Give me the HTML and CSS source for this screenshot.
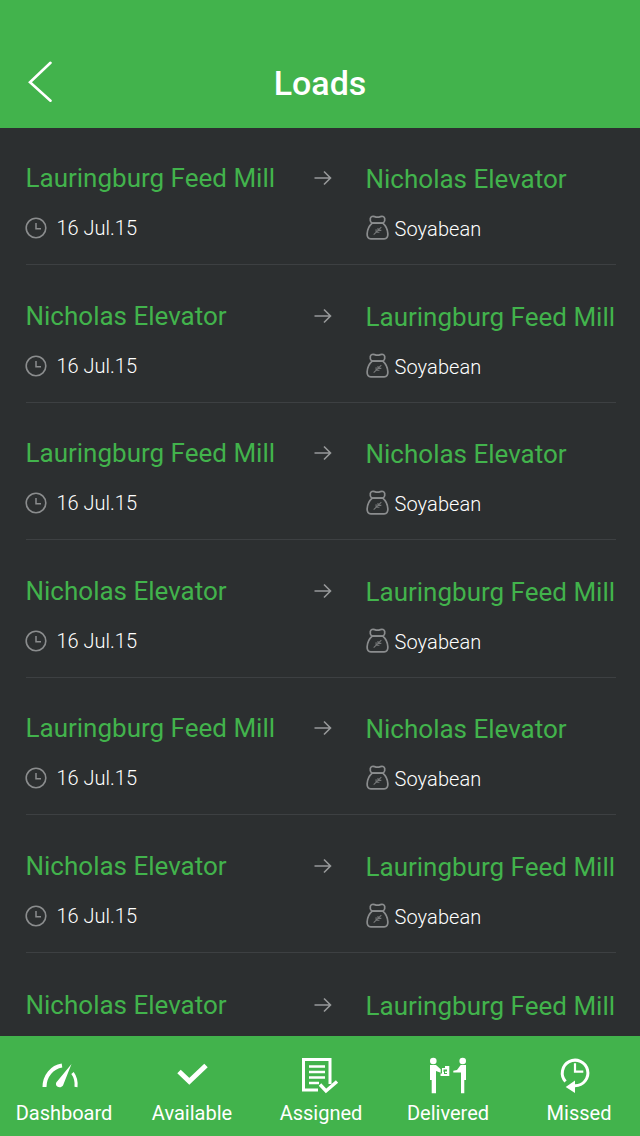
FILE: index.html

```html
<!DOCTYPE html>
<html lang="en">
<head>
  <meta charset="UTF-8">
  <meta name="viewport" content="width=device-width, initial-scale=1.0">
  <title>Loads</title>
  <link rel="stylesheet" href="styles.css">
</head>
<body>

  <svg class="icon-defs" width="0" height="0">
    <defs>
      <symbol id="clock" viewBox="0 0 22 22">
        <circle cx="11" cy="11" r="9.8" fill="none" stroke="#8b8d8e" stroke-width="1.6"/>
        <path d="M11 6v5.8h5" fill="none" stroke="#8b8d8e" stroke-width="1.5"/>
      </symbol>
      <symbol id="arrow" viewBox="0 0 18 16">
        <path d="M0.5 8h16M10 1.5L16.5 8L10 14.5" fill="none" stroke="#97999a" stroke-width="1.6"/>
      </symbol>
      <symbol id="sack" viewBox="0 0 24 26">
        <path d="M6 8.500C4.500 7 4 5.500 4.500 3.500C5 1.500 7 1 9 1.600C11 2.400 13 2.400 15 1.600C17 1 19 1.500 19.500 3.500C20 5.500 19.500 7 18 8.500Z" fill="none" stroke="#8b8d8e" stroke-width="1.800"/>
        <path d="M6.500 8.500C3.500 11 1.500 15 1.200 19.500C1 23 2.500 24.800 5 24.800H19C21.500 24.800 23 23 22.800 19.500C22.500 15 20.500 11 17.500 8.500Z" fill="none" stroke="#8b8d8e" stroke-width="1.800"/>
        <path d="M8 20.500L16 12.500M10.500 18V14.800M12.500 16V13.500M10.500 18H14M12.500 16H16" fill="none" stroke="#77797a" stroke-width="1.100"/>
      </symbol>
    </defs>
  </svg>

  <header class="header">
    <svg class="back-icon" width="26" height="42" viewBox="0 0 26 42">
      <path d="M23.500 1.800L3 21.300L23.500 39.700" fill="none" stroke="#fff" stroke-width="2.600" stroke-linecap="round"/>
    </svg>
    <h1 class="title">Loads</h1>
  </header>

  <main class="load-list" id="load-list"></main>

  <nav class="tabbar">
    <div class="tab">
      <svg class="tab-icon" width="44" height="38" viewBox="0 0 44 38">
        <path d="M2.500 30C2.500 19 10 10 20 8.500" fill="none" stroke="#fff" stroke-width="4"/>
        <path d="M30.500 16C33.500 20 34.500 25 34 30" fill="none" stroke="#fff" stroke-width="3"/>
        <path d="M29.500 7L21 28.500C19 31.500 14.500 30.500 14 27.500C13.800 26 14.500 25 15.500 24Z" fill="#fff"/>
      </svg>
      <span class="tab-label">Dashboard</span>
    </div>
    <div class="tab">
      <svg class="tab-icon" width="44" height="38" viewBox="0 0 44 38">
        <path d="M9 14.500L19.300 24.300L36 8.500" fill="none" stroke="#fff" stroke-width="5"/>
      </svg>
      <span class="tab-label">Available</span>
    </div>
    <div class="tab">
      <svg class="tab-icon" width="44" height="38" viewBox="0 0 44 38">
        <path d="M32 27V2.500H5.500V33H20" fill="none" stroke="#fff" stroke-width="3"/>
        <path d="M11 9.500H27M11 15H27M11 20.500H27M11 26H21" fill="none" stroke="#fff" stroke-width="2.400"/>
        <path d="M22 27.500L28 34L39 24.500" fill="none" stroke="#fff" stroke-width="3.400"/>
      </svg>
      <span class="tab-label">Assigned</span>
    </div>
    <div class="tab">
      <svg class="tab-icon" width="44" height="38" viewBox="0 0 44 38">
        <circle cx="7.300" cy="4" r="3.300" fill="#fff"/>
        <circle cx="36.700" cy="4" r="3.300" fill="#fff"/>
        <path d="M4 8H10L14.700 12.300V15.700L10 14V36.300H5.700V23H4Z" fill="#fff"/>
        <path d="M34.700 8H40V23H38.300V36.300H35V15.500L27.300 15.500V13.800L31 13Z" fill="#fff"/>
        <path d="M16 11H19V9H23.300V19H14.500V16.500H16Z" fill="#fff"/>
        <path d="M17.500 12.500H21V14.500H19V16H21V17H18V15H17.500Z" fill="#42b34c"/>
      </svg>
      <span class="tab-label">Delivered</span>
    </div>
    <div class="tab">
      <svg class="tab-icon" width="44" height="38" viewBox="0 0 44 38">
        <path d="M11.500 24.500A12.800 12.800 0 1 1 21 28.800" fill="none" stroke="#fff" stroke-width="3"/>
        <path d="M21 6.300V14.700H29.300" fill="none" stroke="#fff" stroke-width="2.200"/>
        <path d="M21 23.500V36L11.700 30Z" fill="#fff"/>
      </svg>
      <span class="tab-label">Missed</span>
    </div>
  </nav>

  <script>
    const mill = 'Lauringburg Feed Mill';
    const elevator = 'Nicholas Elevator';

    // Routes from top to bottom, the last row only shows its names above the tab bar
    const loads = [
      [mill, elevator], [elevator, mill], [mill, elevator], [elevator, mill],
      [mill, elevator], [elevator, mill], [elevator, mill]
    ];

    const list = document.getElementById('load-list');

    loads.forEach((route, i) => {
      const showMeta = i < loads.length - 1;
      const row = document.createElement('div');
      row.className = 'load-row';
      row.innerHTML = `
        <div class="load-side load-side-left">
          <div class="place">${route[0]}</div>
          ${showMeta ? `<div class="meta">
            <svg class="clock-icon" width="22" height="22"><use href="#clock"/></svg>
            <span>16 Jul.15</span>
          </div>` : ''}
        </div>
        <svg class="arrow-icon" width="18" height="16"><use href="#arrow"/></svg>
        <div class="load-side load-side-right">
          <div class="place">${route[1]}</div>
          ${showMeta ? `<div class="meta">
            <svg class="sack-icon" width="23" height="25"><use href="#sack"/></svg>
            <span class="crop-name">Soyabean</span>
          </div>` : ''}
        </div>`;
      list.appendChild(row);
    });
  </script>

</body>
</html>
```

FILE: styles.css

```css
html, body {
  height: 100%;
}
body {
  font-family: Roboto, "Liberation Sans", sans-serif;
  margin: 0;
  padding: 0;
  width: 640px;
  height: 1136px;
  overflow: hidden;
  display: flex;
  flex-direction: column;
  background-color: #2c2f30;
}
.icon-defs {
  position: absolute;
}
.header {
  height: 128px;
  flex: none;
  background-color: #42b34c;
  color: white;
  display: flex;
  align-items: flex-end;
  justify-content: center;
  position: relative;
}
.back-icon {
  position: absolute;
  left: 27px;
  top: 61px;
}
.title {
  margin: 0 0 25px;
  font-size: 34px;
  line-height: 40px;
  font-weight: 500;
}
.load-list {
  flex: 1;
  min-height: 0;
  margin-top: -0.5px;
  overflow: hidden;
}
.load-row {
  height: 137.5px;
  box-sizing: border-box;
  margin: 0 24px 0 26px;
  border-bottom: 1px solid #3d4042;
  display: flex;
  align-items: flex-start;
}
.load-side {
  flex: none;
}
.load-side-left {
  width: 288px;
  margin-left: -0.5px;
  padding-top: 34.5px;
}
.load-side-right {
  padding-top: 35.5px;
}
.arrow-icon {
  flex: none;
  margin-top: 42.5px;
  margin-right: 34px;
}
.load-row:last-child .load-side-left {
  padding-top: 36.5px;
}
.load-row:last-child .load-side-right {
  padding-top: 37.5px;
}
.load-row:last-child .arrow-icon {
  margin-top: 44.5px;
}
.place {
  color: #42b34c;
  font-size: 26px;
  line-height: 32px;
  white-space: nowrap;
}
.meta {
  margin-top: 20px;
  height: 28px;
  display: flex;
  align-items: center;
  color: white;
  font-size: 20px;
  font-weight: 300;
}
.crop-name {
  letter-spacing: 0.1px;
}
.clock-icon {
  margin-left: -1px;
  margin-right: 10px;
}
.sack-icon {
  margin-right: 6px;
  margin-top: -3px;
}
.tabbar {
  height: 100px;
  flex: none;
  background-color: #42b34c;
  display: flex;
}
.tab {
  width: 128px;
  height: 100px;
  position: relative;
  display: flex;
  flex-direction: column;
  align-items: center;
  justify-content: flex-end;
  color: white;
}
.tab-icon {
  position: absolute;
  left: 42px;
  top: 21px;
}
.tab-label {
  font-size: 20px;
  line-height: 24px;
  margin-bottom: 11px;
}
.tab:nth-child(3) .tab-label {
  margin-left: 2px;
}
.tab:last-child .tab-label {
  margin-left: 6px;
}
```
